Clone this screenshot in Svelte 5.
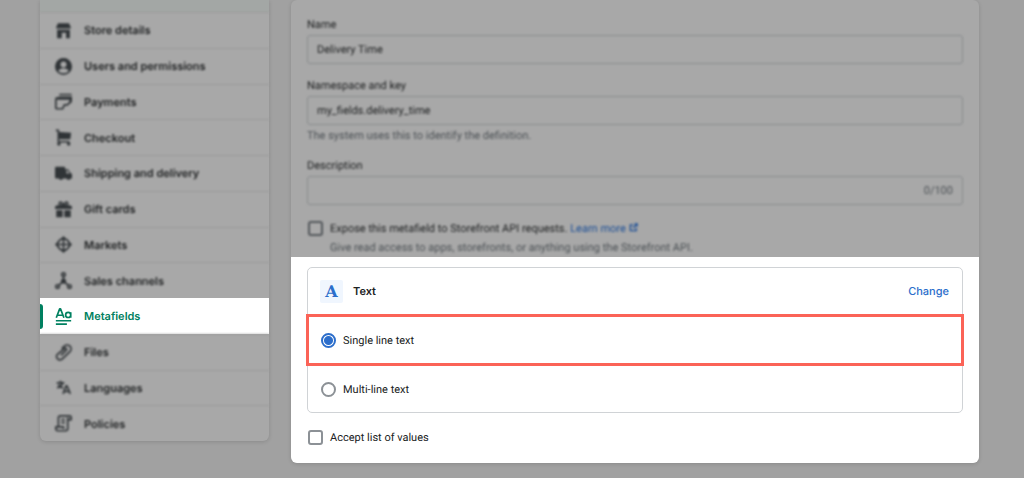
<script lang="ts">
  interface NavItem {
    label: string;
    fill?: string;
    line?: string;
    active?: boolean;
  }

  const items: NavItem[] = [
    {
      label: 'Store details',
      fill: 'M3.5 1.500h13L18.500 6v1.500h-17V6zM2.500 9h15v10H13v-6.500H8V19H2.500z',
    },
    {
      label: 'Users and permissions',
      fill: 'M10 0a10 10 0 1 0 0 20 10 10 0 0 0 0-20zM10 4.200a3.500 3.500 0 1 1 0 7 3.500 3.500 0 0 1 0-7zM3.800 15.200c1.200-2 3.500-3.200 6.200-3.200s5 1.200 6.200 3.200A8 8 0 0 1 10 18a8 8 0 0 1-6.200-2.800z',
    },
    {
      label: 'Payments',
      fill: 'M6 1h12a2 2 0 0 1 2 1.500H4.500A2 2 0 0 1 6 1zM6 4h14v2l-1 6h-2V8H0V7a2 2 0 0 1 2-2z',
      line: 'M1 8v9.500a1 1 0 0 0 1 1h7l2-4.500h3.500l4.500-4.500V5',
    },
    {
      label: 'Checkout',
      fill: 'M4 3.500l15 1-1 7.500H5zM4.500 15.500a2 2 0 1 1-1 3.700 2 2 0 0 1 1-3.700zM16 15.500a2 2 0 1 1-1 3.700 2 2 0 0 1 1-3.700z',
      line: 'M1 1.500h3v13.500h13',
    },
    {
      label: 'Shipping and delivery',
      fill: 'M1.500 2h9A1.500 1.500 0 0 1 12 3.500V5h3.500l2.500 4 2 1.500V16h-1.500a2.700 2.700 0 0 1-5 0h-4a2.700 2.700 0 0 1-5 0H1.500A1.500 1.500 0 0 1 0 14.500v-11A1.500 1.500 0 0 1 1.500 2zM13.500 6.500V10h3.500l-2-3.500z',
    },
    {
      label: 'Gift cards',
      fill: 'M3 5h14a3 3 0 0 1 3 3v1.500H0V8a3 3 0 0 1 3-3zM1.500 11H9v8H1.500zM11 11h7.500v8H11z',
      line: 'M9.500 5C7 5 4.500 4.500 5 2.500S9 1 9.500 5zM10.500 5c2.500 0 5-.5 4.500-2.500S11 1 10.500 5z',
    },
    {
      label: 'Markets',
      fill: 'M10 0L14 4H6zM10 20L6 16h8zM0 10L4 6v8zM20 10L16 14V6z',
      line: 'M10 3l4 1.500 1.500 1.500L17.500 10l-2 4-1.500 1.500L10 17.500l-4-2L4.500 14l-2-4 2-4L6 4.500zM4.500 10h11M10 4v12',
    },
    {
      label: 'Sales channels',
      fill: 'M10 7l3 2.500v4H7v-4z',
      line: 'M10 1a2 2 0 1 1 0 4 2 2 0 0 1 0-4zM3 15a2 2 0 1 1 0 4 2 2 0 0 1 0-4zM17 15a2 2 0 1 1 0 4 2 2 0 0 1 0-4zM10 5v6M4.500 15.500L10 11l5.500 4.500',
    },
    {
      label: 'Metafields',
      line: 'M1.500 11.500L5.500 1h1L10.500 11.500M3 8.500h6M18.500 5v6.500M18.500 8.200a3 3 0 1 1-6 0 3 3 0 0 1 6 0zM1 15h18M1 19h13',
      active: true,
    },
    {
      label: 'Files',
      line: 'M7 13.500l6.500-6.500a1.500 1.500 0 0 0-2-2L2.500 12.500a4 4 0 0 0 5.500 5.500l9.500-9a4.500 4.500 0 0 0-6.500-6.500L8 5.500M13.500 7l-5 5',
    },
    {
      label: 'Languages',
      line: 'M2 4.500h9M6.500 2v2.500M9 4.500c-1 3-3.500 5-6.500 6M4 6.500c1 2 3 3.500 5.500 4M9.500 17.500L13 8h1l4 9.500M10.500 14.500h6.500',
    },
    {
      label: 'Policies',
      line: 'M4 14V3.500A2.500 2.500 0 0 1 6.500 1H17a2 2 0 0 1 2 2v2.500h-4M15 3v13a2.500 2.500 0 0 1-2.500 2.500h-9A2.500 2.500 0 0 1 1 16v-2h9v2.500M7.500 5.500h4M7.500 9h4',
    },
  ];

  let name = $state('Delivery Time');
  let key = $state('my_fields.delivery_time');
  let description = $state('');
  let expose = $state(false);
  let acceptList = $state(false);
  let textType = $state('single');
</script>

<div class="page">
  <nav class="sidebar">
    <div class="previous"></div>
    {#each items as item}
      <a href="#{item.label}" class="item" class:active={item.active}>
        <svg viewBox="0 0 20 20" aria-hidden="true">
          {#if item.fill}<path class="fill" d={item.fill} />{/if}
          {#if item.line}<path class="line" d={item.line} />{/if}
        </svg>
        <span>{item.label}</span>
      </a>
    {/each}
  </nav>

  <main class="card">
    <div class="fields">
      <div class="field">
        <label for="name">Name</label>
        <input id="name" type="text" bind:value={name} />
      </div>
      <div class="field">
        <label for="key">Namespace and key</label>
        <input id="key" type="text" bind:value={key} />
        <p class="help">The system uses this to identify the definition.</p>
      </div>
      <div class="field">
        <label for="description">Description</label>
        <div class="counted">
          <input id="description" type="text" maxlength="100" bind:value={description} />
          <span class="count">{description.length}/100</span>
        </div>
      </div>
      <div class="expose">
        <div class="choice">
          <input id="expose" type="checkbox" bind:checked={expose} />
          <span>
            <label for="expose">Expose this metafield to Storefront API requests.</label>
            <a href="#learn" class="learn">Learn more
              <svg viewBox="0 0 20 20" aria-hidden="true">
                <path d="M9 4H3v13h13v-6M12 2h6v6M18 2l-9 9" />
              </svg></a>
          </span>
        </div>
        <p class="help">Give read access to apps, storefronts, or anything using the Storefront API.</p>
      </div>
    </div>

    <section class="panel">
      <div class="type">
        <header>
          <span class="type-icon" aria-hidden="true">A</span>
          <h2>Text</h2>
          <button type="button">Change</button>
        </header>
        <label class="option highlighted">
          <input type="radio" name="type" value="single" bind:group={textType} />
          Single line text
        </label>
        <label class="option">
          <input type="radio" name="type" value="multi" bind:group={textType} />
          Multi-line text
        </label>
      </div>
      <label class="choice">
        <input type="checkbox" bind:checked={acceptList} />
        Accept list of values
      </label>
    </section>
  </main>
</div>

<style>
  :global(body) {
    margin: 0;
    background: #a1a1a1;
  }

  .page {
    box-sizing: border-box;
    min-height: 100vh;
    display: flex;
    gap: 22px;
    padding: 0 45px 0 40px;
    font-family: Roboto, 'Liberation Sans', sans-serif;
    font-size: 11px;
    line-height: 17px;
    color: #202223;
    text-rendering: geometricPrecision;
  }

  .sidebar {
    flex: 0 0 229px;
    display: flex;
    flex-direction: column;
    margin-bottom: 37px;
    background: #a8a8a8;
    border-radius: 0 0 6px 6px;
    box-shadow: 0 1px 4px rgba(0, 0, 0, 0.14);
  }

  .previous {
    height: 12px;
    background: #a3a7a5;
  }

  .item {
    position: relative;
    flex: 1 0 35px;
    box-sizing: border-box;
    display: flex;
    align-items: center;
    gap: 12px;
    padding-left: 15px;
    border-top: 1px solid #989999;
    color: #202223;
    font-family: Inter, 'Liberation Sans', sans-serif;
    font-weight: 600;
    line-height: 16px;
    text-decoration: none;
    filter: blur(1px);
  }

  .item svg {
    width: 17px;
    height: 17px;
    overflow: visible;
  }

  .fill {
    fill: #303437;
    fill-rule: evenodd;
  }

  .line {
    fill: none;
    stroke: #303437;
    stroke-width: 2;
    stroke-linejoin: round;
  }

  .item.active {
    background: #fff;
    border-color: #fff;
    color: #008060;
    filter: none;
  }

  .item.active .line {
    stroke: #008060;
  }

  .item.active::before {
    content: '';
    position: absolute;
    top: 5px;
    bottom: 5px;
    left: 0;
    width: 3px;
    border-radius: 0 3px 3px 0;
    background: #008060;
  }

  .card {
    flex: 1;
    min-width: 0;
    align-self: flex-start;
    background: #a8a8a8;
    border-radius: 6px;
    box-shadow: 0 1px 4px rgba(0, 0, 0, 0.14);
  }

  .fields {
    display: flex;
    flex-direction: column;
    gap: 13px;
    padding: 16px 16px 1px;
    filter: blur(1px);
  }

  .field {
    display: flex;
    flex-direction: column;
    gap: 2px;
  }

  input[type='text'] {
    box-sizing: border-box;
    width: 100%;
    height: 29px;
    padding: 0 9px;
    border: 1px solid #898c8e;
    border-radius: 3px;
    background: transparent;
    color: #202223;
    font: inherit;
    text-rendering: inherit;
  }

  p {
    margin: 0;
  }

  .help,
  .count {
    color: #4d5256;
  }

  .counted {
    position: relative;
    display: flex;
  }

  .count {
    position: absolute;
    top: 6px;
    right: 10px;
  }

  .expose {
    display: flex;
    flex-direction: column;
    gap: 2px;
    padding-top: 2px;
  }

  .expose .help {
    padding-left: 23px;
  }

  .choice {
    display: flex;
    align-items: center;
    gap: 7px;
    padding-left: 1px;
  }

  input[type='checkbox'],
  input[type='radio'] {
    appearance: none;
    box-sizing: border-box;
    flex: none;
    width: 15px;
    height: 15px;
    margin: 0;
    border: 2px solid #8c9196;
    border-radius: 3px;
  }

  .fields input[type='checkbox'] {
    border-color: #53575b;
  }

  .learn {
    color: #1d4f96;
    text-decoration: none;
  }

  .learn svg {
    width: 9px;
    height: 9px;
    fill: none;
    stroke: #1d4f96;
    stroke-width: 3;
  }

  .panel {
    padding: 10px 16px 17px;
    border-radius: 0 0 6px 6px;
    background: #fff;
  }

  .type {
    margin-bottom: 16px;
    border: 1px solid #d0d3d6;
    border-radius: 5px;
  }

  header {
    display: flex;
    align-items: center;
    height: 47px;
    padding: 0 13px 0 12px;
    font-family: Inter, 'Liberation Sans', sans-serif;
  }

  .type-icon {
    width: 23px;
    margin-right: 10px;
    border-radius: 2px;
    background: #f0f6fe;
    color: #2c6ecb;
    font: bold 16px/23px 'DejaVu Serif', serif;
    text-align: center;
  }

  h2 {
    flex: 1;
    margin: 0;
    font-size: 11px;
    font-weight: 600;
  }

  button {
    padding: 0;
    border: 0;
    background: none;
    color: #2c6ecb;
    font: inherit;
    font-weight: 500;
    text-rendering: inherit;
    cursor: pointer;
  }

  .option {
    display: flex;
    align-items: center;
    gap: 7px;
    height: 46px;
    padding-left: 13px;
  }

  .option.highlighted {
    box-sizing: border-box;
    height: 52px;
    margin: -1px -2px 0;
    padding-left: 12px;
    border: 3px solid #fb6357;
  }

  input[type='radio'] {
    border-radius: 50%;
  }

  input[type='radio']:checked {
    border-color: #2c6ecb;
    background: radial-gradient(circle, #2c6ecb 4px, #fff 5px);
  }
</style>
